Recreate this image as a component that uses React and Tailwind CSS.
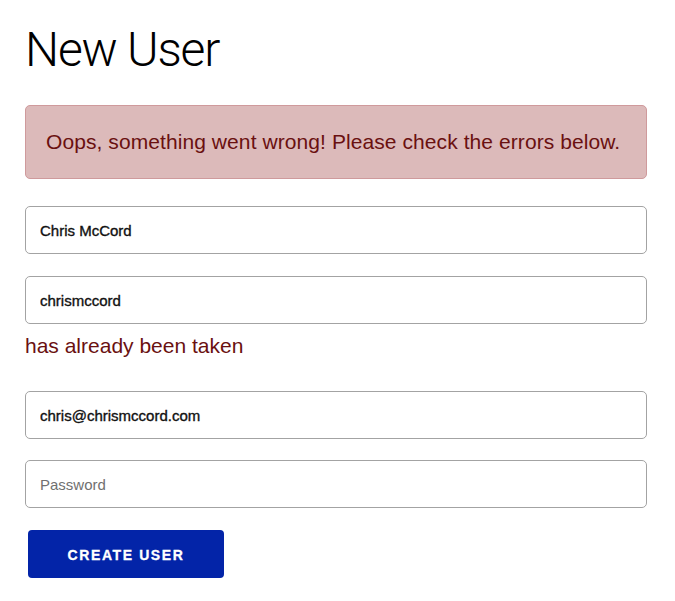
import { useState } from "react";

let Field = ({ value, placeholder, type = "text", onChange }) => {
	return (
		<input
			type={type}
			value={value}
			placeholder={placeholder}
			onChange={onChange}
			className="block w-full h-[48px] rounded-[5px] border border-[#a3a3a3] bg-white px-[14px] text-[15px] text-[#111] placeholder-[#707070] outline-none"
			style={{ fontFamily: '"Liberation Sans", Arial, sans-serif', WebkitTextStroke: value ? "0.35px #111" : "0" }}
		/>
	)
}

let ErrorText = ({ children }) => (
	<p className="mt-[10px] text-[21px] leading-[24px] text-[#6a1010]">{children}</p>
)

export default function App() {
	let [form, setForm] = useState({
		name: "Chris McCord",
		username: "chrismccord",
		email: "chris@chrismccord.com",
		password: "",
	})

	let set = (key) => (e) => setForm({ ...form, [key]: e.target.value })

	return (
		<div className="min-h-screen bg-white px-[25px] pt-[22px]" style={{ fontFamily: '"Liberation Sans", Arial, sans-serif' }}>
			<h1 className="text-[48px] leading-[56px] font-light tracking-tight text-black" style={{ fontFamily: 'Roboto, "Liberation Sans", sans-serif' }}>
				New User
			</h1>

			<div className="mt-[27px] w-[622px] h-[74px] flex items-center rounded-[5px] border border-[#cf9a9c] bg-[#dcbaba] pl-[20px]">
				<p className="text-[21px] tracking-[0.08px] text-[#6a1010]">Oops, something went wrong! Please check the errors below.</p>
			</div>

			<form className="mt-[27px] w-[622px]" onSubmit={(e) => e.preventDefault()}>
				<Field value={form.name} onChange={set("name")} />

				<div className="mt-[22px]">
					<Field value={form.username} onChange={set("username")} />
					<ErrorText>has already been taken</ErrorText>
				</div>

				<div className="mt-[33px]">
					<Field value={form.email} onChange={set("email")} />
				</div>

				<div className="mt-[21px]">
					<Field type="password" placeholder="Password" value={form.password} onChange={set("password")} />
				</div>

				<button
					type="submit"
					className="mt-[22px] ml-[3px] w-[196px] h-[48px] rounded-[4px] bg-[#0324a8] pt-[2px] text-white text-[14px] font-bold tracking-[1.6px]"
					style={{ WebkitTextStroke: "0.3px #fff" }}
				>
					CREATE USER
				</button>
			</form>
		</div>
	)
}
